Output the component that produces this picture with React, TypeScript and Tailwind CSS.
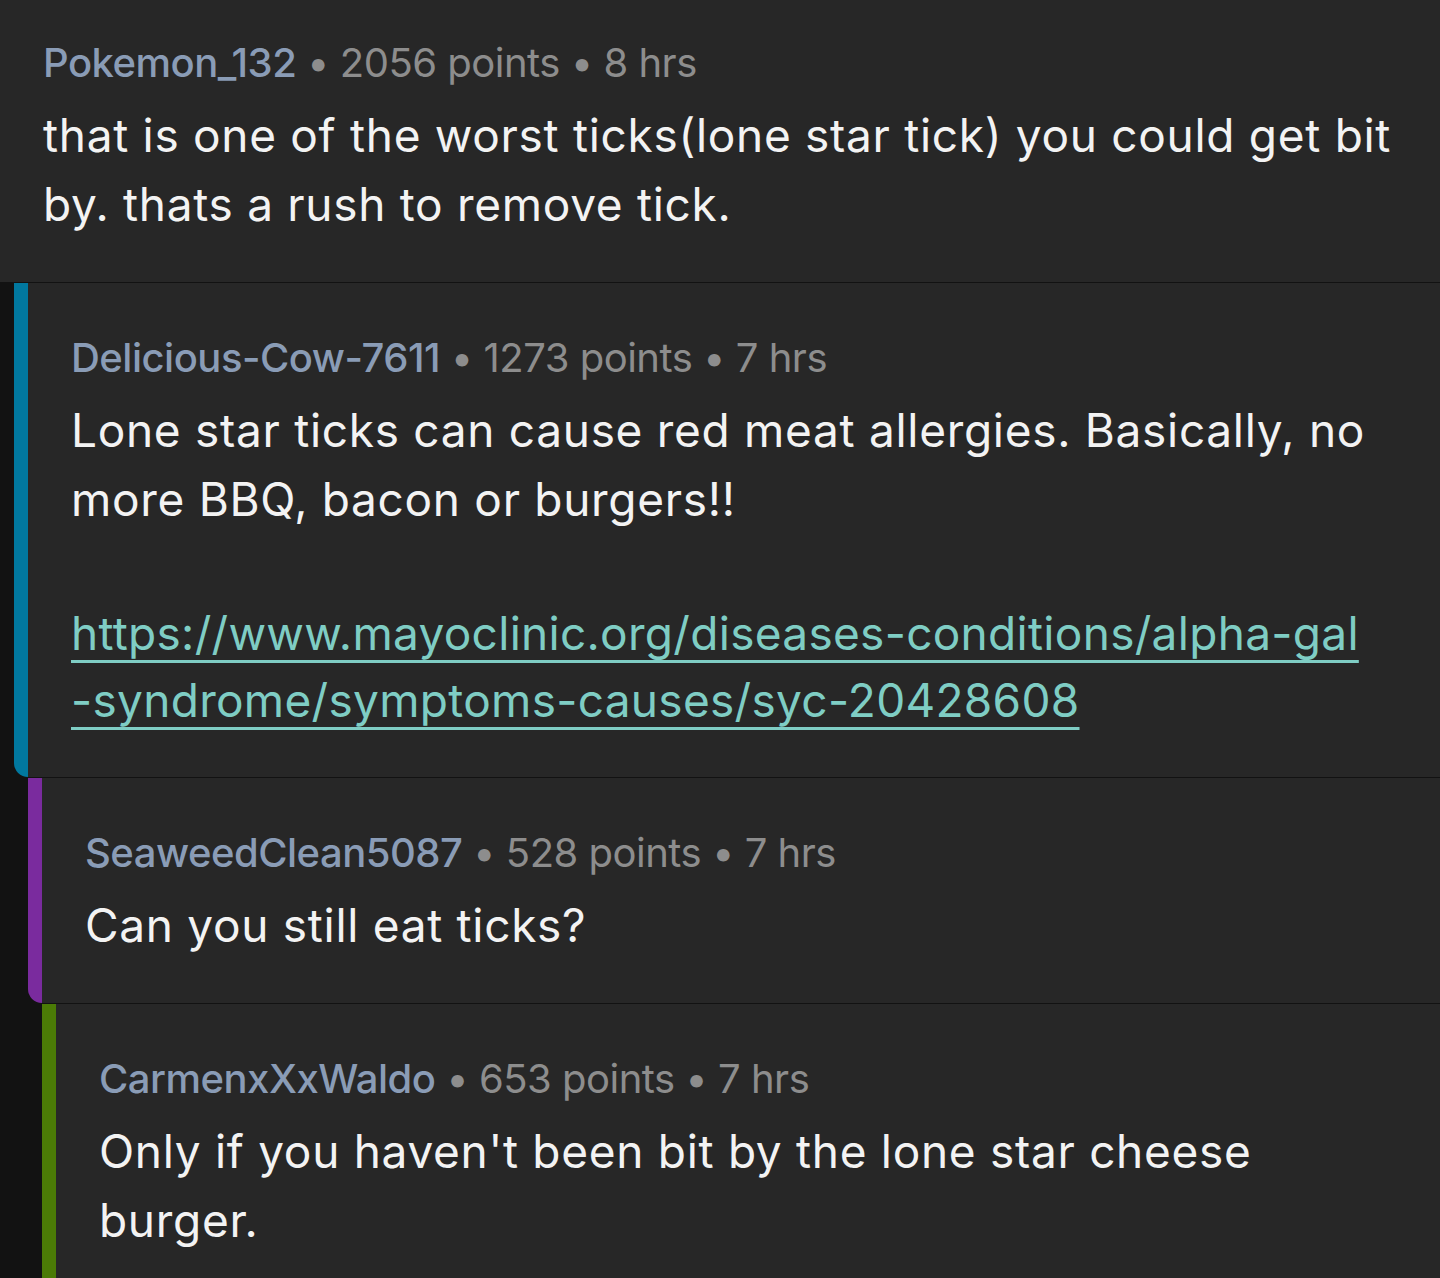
import React from 'react';

type Comment = {
  id: number;
  depth: number;
  author: string;
  points: number;
  age: string;
  body: React.ReactNode;
};

const barColors = ['', 'border-[#01789f]', 'border-[#7a2b9e]', 'border-[#4b7b06]'];
const indents = ['ml-0', 'ml-[14px]', 'ml-[28px]', 'ml-[42px]'];

const comments: Comment[] = [
  {
    id: 1,
    depth: 0,
    author: 'Pokemon_132',
    points: 2056,
    age: '8 hrs',
    body: (
      <p>that is one of the worst ticks(lone star tick) you could get bit by. thats a rush to remove tick.</p>
    ),
  },
  {
    id: 2,
    depth: 1,
    author: 'Delicious-Cow-7611',
    points: 1273,
    age: '7 hrs',
    body: (
      <>
        <p>Lone star ticks can cause red meat allergies. Basically, no more BBQ, bacon or burgers!!</p>
        <p className="mt-[66px] leading-[67px] tracking-[0.3px]">
          <a href="#" className="text-[#7fcdc4] underline decoration-[3px] underline-offset-[10px]">
            https://www.mayoclinic.org/diseases-conditions/alpha-gal
            <br />
            -syndrome/symptoms-causes/syc-20428608
          </a>
        </p>
      </>
    ),
  },
  {
    id: 3,
    depth: 2,
    author: 'SeaweedClean5087',
    points: 528,
    age: '7 hrs',
    body: <p>Can you still eat ticks?</p>,
  },
  {
    id: 4,
    depth: 3,
    author: 'CarmenxXxWaldo',
    points: 653,
    age: '7 hrs',
    body: <p>Only if you haven't been bit by the lone star cheese burger.</p>,
  },
];

const CommentRow: React.FC<{ comment: Comment; first: boolean; last: boolean }> = ({
  comment,
  first,
  last,
}) => {
  const nested = comment.depth > 0;
  return (
    <div
      className={[
        'mb-px bg-[#272727] pr-[40px]',
        indents[comment.depth],
        nested ? `border-l-[14px] rounded-bl-[14px] pl-[43px] ${barColors[comment.depth]}` : 'pl-[43px]',
        first ? 'pt-[35px]' : 'pt-[47px]',
        last ? 'pb-[120px]' : 'pb-[43px]',
      ].join(' ')}
    >
      {/* Header */}
      <div className="text-[40px] leading-[56px] tracking-[-0.5px] text-[#8d8d8d]">
        <span className="font-medium text-[#8a9cb6]">{comment.author}</span>
        <span> • {comment.points} points • {comment.age}</span>
      </div>
      <div className="mt-[10px] text-[46px] leading-[69px] tracking-[0.7px] text-[#f3f3f3]">
        {comment.body}
      </div>
    </div>
  );
};

export default function App() {
  return (
    <div
      className="h-[1278px] overflow-hidden bg-[#121212]"
      style={{ fontFamily: 'Inter, Roboto, "Noto Sans", sans-serif' }}
    >
      {comments.map((c, i) => (
        <CommentRow key={c.id} comment={c} first={i === 0} last={i === comments.length - 1} />
      ))}
    </div>
  );
}
